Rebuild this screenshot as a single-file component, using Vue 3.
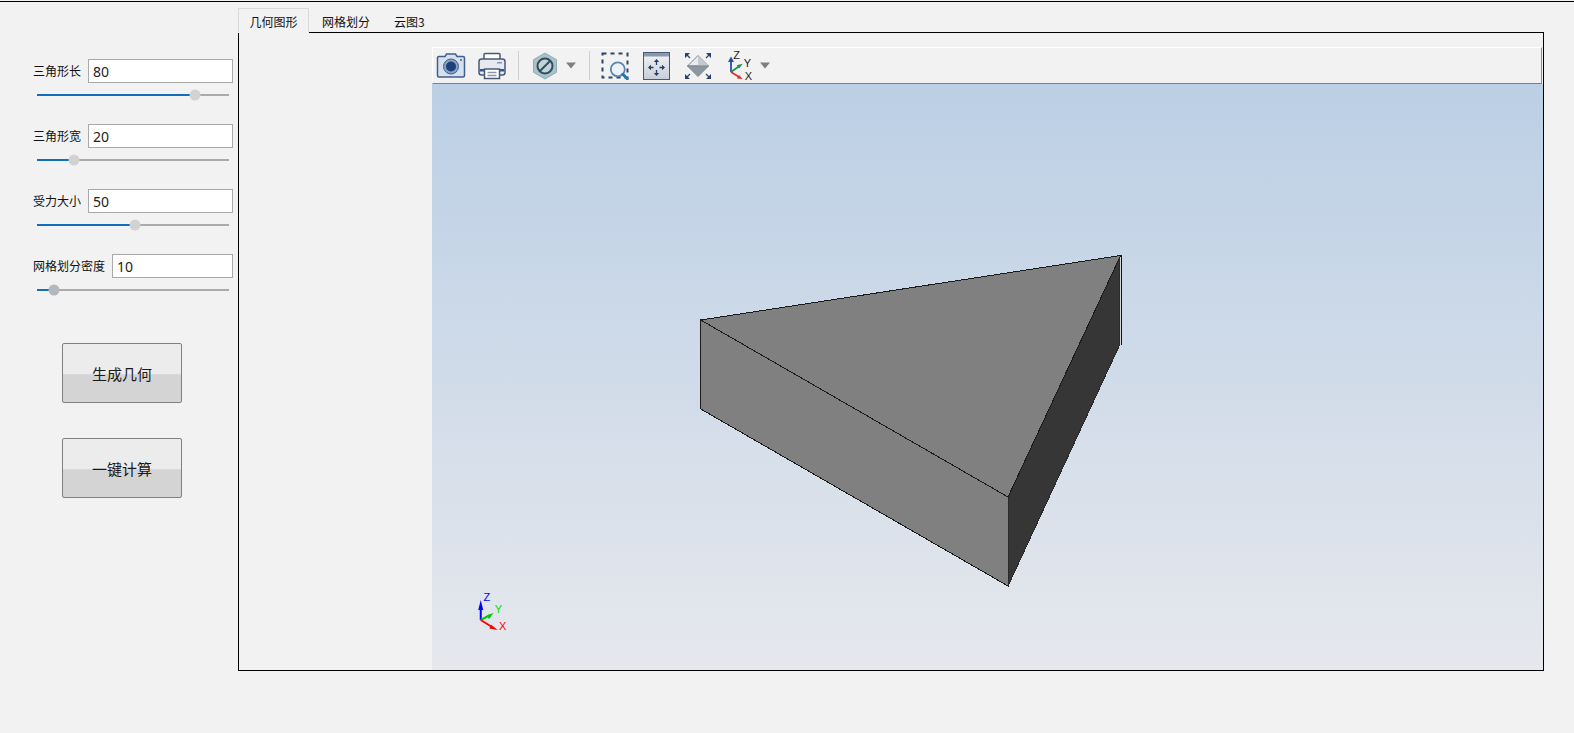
<script setup>
const params = [
  { label: '三角形长', value: '80', pct: 82.3, thumb: '#d2d2d2' },
  { label: '三角形宽', value: '20', pct: 19.3, thumb: '#d2d2d2' },
  { label: '受力大小', value: '50', pct: 51, thumb: '#d2d2d2' },
  { label: '网格划分密度', value: '10', pct: 8.9, thumb: '#b4b8bc' }
]
const tabs = ['几何图形', '网格划分', '云图3']
</script>

<template>
  <div class="root">
    <div class="page">
      <aside class="side">
        <div class="params">
          <div v-for="p in params" :key="p.label" class="param">
            <div class="field">
              <span class="lbl">{{ p.label }}</span>
              <input class="inp" :value="p.value" readonly />
            </div>
            <div class="slider">
              <div class="fill" :style="{ width: p.pct + '%' }"></div>
              <div class="thumb" :style="{ left: p.pct + '%', background: p.thumb }"></div>
            </div>
          </div>
        </div>
        <div class="btns">
          <button class="btn">生成几何</button>
          <button class="btn">一键计算</button>
        </div>
      </aside>

      <main class="main">
        <div class="tabs">
          <div v-for="(t, i) in tabs" :key="t" class="tab" :class="{ active: i === 0 }">{{ t }}</div>
        </div>
        <div class="pane">
          <div class="viewer">
            <div class="toolbar">
              <!-- camera -->
              <svg class="ic m-cam" width="30" height="26" viewBox="0 0 30 26">
                <path d="M1.500 5q0-1.500 1.500-1.500H9l1.500-2.500h9L21 3.500h6q1.500 0 1.500 1.500v17.500q0 1.500-1.500 1.500H3q-1.500 0-1.500-1.500z" fill="#d5e1ef" stroke="#3f5f8c" stroke-width="1.500"/>
                <circle cx="15" cy="13.500" r="7.500" fill="#8ba0bd" stroke="#3f5f8c"/>
                <circle cx="15" cy="13.500" r="5" fill="#1d3f7c"/>
                <circle cx="25" cy="7" r="1" fill="#3f5f8c"/>
              </svg>
              <!-- printer -->
              <svg class="ic m-12" width="28" height="28" viewBox="0 0 28 28">
                <rect x="6" y="1.500" width="16" height="7" rx="1" fill="#fff" stroke="#4a5a74" stroke-width="1.500"/>
                <rect x="1" y="7" width="26" height="16" rx="2.500" fill="#e6eaf0" stroke="#4a5a74" stroke-width="1.500"/>
                <rect x="1.700" y="17" width="24.600" height="2.500" fill="#2b5a96"/>
                <rect x="19" y="10" width="5" height="1.500" fill="#8a94a3"/>
                <rect x="6.500" y="17" width="15" height="9.500" fill="#fff" stroke="#4a5a74" stroke-width="1.500"/>
                <path d="M9.500 20.500h9M9.500 23.500h9" stroke="#8a94a3" stroke-width="1.500"/>
              </svg>
              <div class="sep m-12"></div>
              <!-- hexagon -->
              <svg class="ic m-13" width="26" height="28" viewBox="0 0 26 28">
                <path d="M13 1 24.500 7.700v12.600L13 27 1.500 20.300V7.700z" fill="#a9c2c9" stroke="#8fadb5"/>
                <circle cx="13" cy="14" r="7.500" fill="#c3d3d8" stroke="#2f4f5c" stroke-width="2"/>
                <path d="M8 19 18 9" stroke="#2f4f5c" stroke-width="2"/>
              </svg>
              <svg class="ic m-7" width="12" height="7" viewBox="0 0 12 7"><path d="M1 0.500h10L6 6.500z" fill="#7f7f7f"/></svg>
              <div class="sep m-12"></div>
              <!-- zoom box -->
              <svg class="ic m-11" width="28" height="28" viewBox="0 0 28 28">
                <rect x="1.500" y="1.500" width="25" height="24" fill="none" stroke="#2e4464" stroke-width="2" stroke-dasharray="4 4"/>
                <circle cx="16.800" cy="17.300" r="7" fill="#edf2f6" stroke="#5c86ad" stroke-width="1.800"/>
                <path d="M21.800 22.300l4.500 4.500" stroke="#1f77b4" stroke-width="3" stroke-linecap="round"/>
              </svg>
              <!-- fit -->
              <svg class="ic m-14" width="27" height="28" viewBox="0 0 27 28">
                <defs><linearGradient id="fg" x1="0" y1="0" x2="0" y2="1"><stop offset="0" stop-color="#f3f4f7"/><stop offset="1" stop-color="#c7cdd8"/></linearGradient></defs>
                <rect x="0.500" y="0.500" width="26" height="27" fill="url(#fg)" stroke="#47597a"/>
                <rect x="1" y="1" width="25" height="3.500" fill="#8b98ae"/>
                <path d="M13.500 9v4M13.500 18v4M6.500 15.500h4M16.500 15.500h4" stroke="#25406b" stroke-width="1.300"/>
                <path d="M13.500 7l-2.700 3h5.400zM13.500 24l-2.700-3h5.400zM5 15.500l3-2.700v5.400zM22 15.500l-3-2.700v5.400z" fill="#25406b"/>
              </svg>
              <!-- zoom extents -->
              <svg class="ic m-14" width="28" height="28" viewBox="0 0 28 28">
                <path d="M14 3.500 24.500 14h-21z" fill="#e9ebee" stroke="#7c8794"/>
                <path d="M14 3.500 24.500 14H14z" fill="#c4c9d0"/>
                <path d="M3.500 14h21L14 24.500z" fill="#8d96a3" stroke="#7c8794"/>
                <path d="M1 1h5L1 6zM27 1h-5l5 5zM1 27h5l-5-5zM27 27h-5l5-5z" fill="#2a4467"/>
                <path d="M3 3l3 3M25 3l-3 3M3 25l3-3M25 25l-3-3" stroke="#2a4467" stroke-width="1.200"/>
              </svg>
              <!-- triad -->
              <svg class="ic m-12" width="32" height="34" viewBox="0 -2 32 34">
                <path d="M7 21V9" stroke="#2550a8" stroke-width="1.800"/>
                <path d="M7 5.500 4 11h6z" fill="#2550a8"/>
                <path d="M7 21 15.500 15" stroke="#1f9150" stroke-width="1.800"/>
                <path d="M18.700 12.800l-6 1.400 2.400 3.400z" fill="#1f9150"/>
                <path d="M7 21 15 26" stroke="#e23030" stroke-width="1.800"/>
                <path d="M18.700 28l-5.800-.6 2.100-3.500z" fill="#e23030"/>
                <text x="12.700" y="7.800" class="axt">Z</text>
                <text x="23.300" y="16" class="axt">Y</text>
                <text x="24.300" y="28.700" class="axt">X</text>
              </svg>
              <svg class="ic m-3" width="12" height="7" viewBox="0 0 12 7"><path d="M1 0.500h10L6 6.500z" fill="#7f7f7f"/></svg>
            </div>
            <svg class="scene" viewBox="432 84 1110 586" preserveAspectRatio="none">
              <defs>
                <linearGradient id="bg" x1="0" y1="0" x2="0" y2="1">
                  <stop offset="0" stop-color="#bbcfe5"/>
                  <stop offset="1" stop-color="#e6e8ed"/>
                </linearGradient>
              </defs>
              <rect x="432" y="84" width="1110" height="586" fill="url(#bg)"/>
              <g shape-rendering="crispEdges">
                <path d="M700.500 320 1007.500 497V586L700.500 409z" fill="#808080" stroke="#1a1a1a"/>
                <path d="M1119 255.500V345L1007.500 586V497z" fill="#363636" stroke="#2a2a2a"/>
                <path d="M700.500 320 1120 255.500 1007.500 497z" fill="#808080" stroke="#1a1a1a"/>
                <path d="M1119.500 258V344" stroke="#d8d8d8"/>
                <path d="M1120.500 255V345" stroke="#111"/>
              </g>
              <!-- axes -->
              <path d="M480.700 620V606" stroke="#0000ff" stroke-width="2"/>
              <path d="M480.700 600l-2.500 10h5z" fill="#0000ff"/>
              <path d="M480.700 620 490 615" stroke="#00cc00" stroke-width="2"/>
              <path d="M493.500 612.700l-6.500 3 2 3.500z" fill="#00cc00"/>
              <path d="M480.700 620 492 627" stroke="#ff0000" stroke-width="2"/>
              <path d="M497.700 630l-8.500-1.500 2-3.800z" fill="#ff0000"/>
              <text x="486.700" y="601" class="ax" fill="#0000ff">Z</text>
              <text x="498.300" y="613.500" class="ax" fill="#00dd00">Y</text>
              <text x="502.700" y="630.500" class="ax" fill="#ff0000">X</text>
            </svg>
          </div>
        </div>
      </main>
    </div>
  </div>
</template>

<style>
html, body { margin: 0; background: #f2f2f2; overflow: hidden; }
</style>

<style scoped>
.root {
  box-sizing: border-box;
  width: 1574px;
  height: 733px;
  padding-top: 1px;
  background: #f2f2f2;
}
.page {
  box-sizing: border-box;
  height: 732px;
  display: flex;
  border-top: 1px solid #000;
  font-family: "Noto Sans CJK SC", "Liberation Sans", sans-serif;
  color: #111;
}
.side { width: 238px; flex: none; padding-top: 57px; box-sizing: border-box; }
.params { display: flex; flex-direction: column; gap: 23px; padding-left: 33px; width: 200px; }
.param { display: flex; flex-direction: column; gap: 5px; }
.field { display: flex; align-items: center; gap: 7px; height: 24px; }
.lbl { font-size: 12px; line-height: 16px; white-space: nowrap; }
.inp {
  flex: 1;
  min-width: 0;
  box-sizing: border-box;
  height: 24px;
  border: 1px solid #a9a9a9;
  background: #fff;
  padding: 0 4px;
  font: 14px "Noto Sans", "Liberation Sans", sans-serif;
  color: #222;
  outline: none;
  border-radius: 0;
}
.slider {
  position: relative;
  height: 2px;
  margin: 6px 4px 5px 4px;
  background: #aaaaaa;
}
.fill { height: 100%; background: #106ebe; }
.thumb {
  position: absolute;
  top: 50%;
  width: 11px;
  height: 11px;
  border-radius: 50%;
  transform: translate(-50%, -50%);
}
.btns {
  display: flex;
  flex-direction: column;
  gap: 35px;
  padding: 47px 0 0 62px;
}
.btn {
  box-sizing: border-box;
  width: 120px;
  height: 60px;
  border: 1px solid #808080;
  border-radius: 2px;
  padding: 0;
  background: linear-gradient(#ececec 0, #ececec 51%, #d4d4d4 53%, #d4d4d4 100%);
  font: 15px "Noto Sans CJK SC", sans-serif;
  color: #1a1a1a;
}
.main { width: 1306px; flex: none; display: flex; flex-direction: column; padding-top: 6px; box-sizing: border-box; }
.tabs { display: flex; height: 25px; position: relative; z-index: 1; margin-bottom: -1px; }
.tab {
  box-sizing: border-box;
  height: 24px;
  padding: 0 12px;
  font-size: 12px;
  line-height: 25px;
  border: 1px solid transparent;
  border-bottom: 0;
  color: #111;
  white-space: nowrap;
}
.tab.active {
  background: #f2f2f2;
  border-color: #d9d9d9;
  height: 25px;
  border-bottom: 1px solid #f2f2f2;
  padding: 0 10.5px;
}
.tab:last-child { margin-left: -2px; }
.pane {
  box-sizing: border-box;
  width: 1306px;
  height: 639px;
  border: 1px solid #000;
  padding: 14px 0 0 193px;
}
.viewer { display: flex; flex-direction: column; height: 100%; }
.toolbar {
  box-sizing: border-box;
  height: 37px;
  flex: none;
  margin-right: 1px;
  display: flex;
  align-items: center;
  background: #f2f2f2;
  border-top: 1px solid #fff;
  border-left: 1px solid #fff;
  border-right: 1px solid #8c8c8c;
  border-bottom: 1px solid #808080;
}
.ic { flex: none; display: block; }
.m-cam { margin-left: 3.3px; }
.m-3 { margin-left: 3px; }
.m-7 { margin-left: 7px; }
.m-11 { margin-left: 11px; }
.m-12 { margin-left: 12px; }
.m-13 { margin-left: 13px; }
.m-14 { margin-left: 14px; }
.sep { width: 1px; height: 29px; background: #cfcfcf; flex: none; }
.axt { font: 11px "Liberation Sans", sans-serif; fill: #222; text-anchor: middle; }
.scene { display: block; flex: 1; min-height: 0; width: 100%; }
.ax { font: 11px "Liberation Sans", sans-serif; text-anchor: middle; }
</style>
